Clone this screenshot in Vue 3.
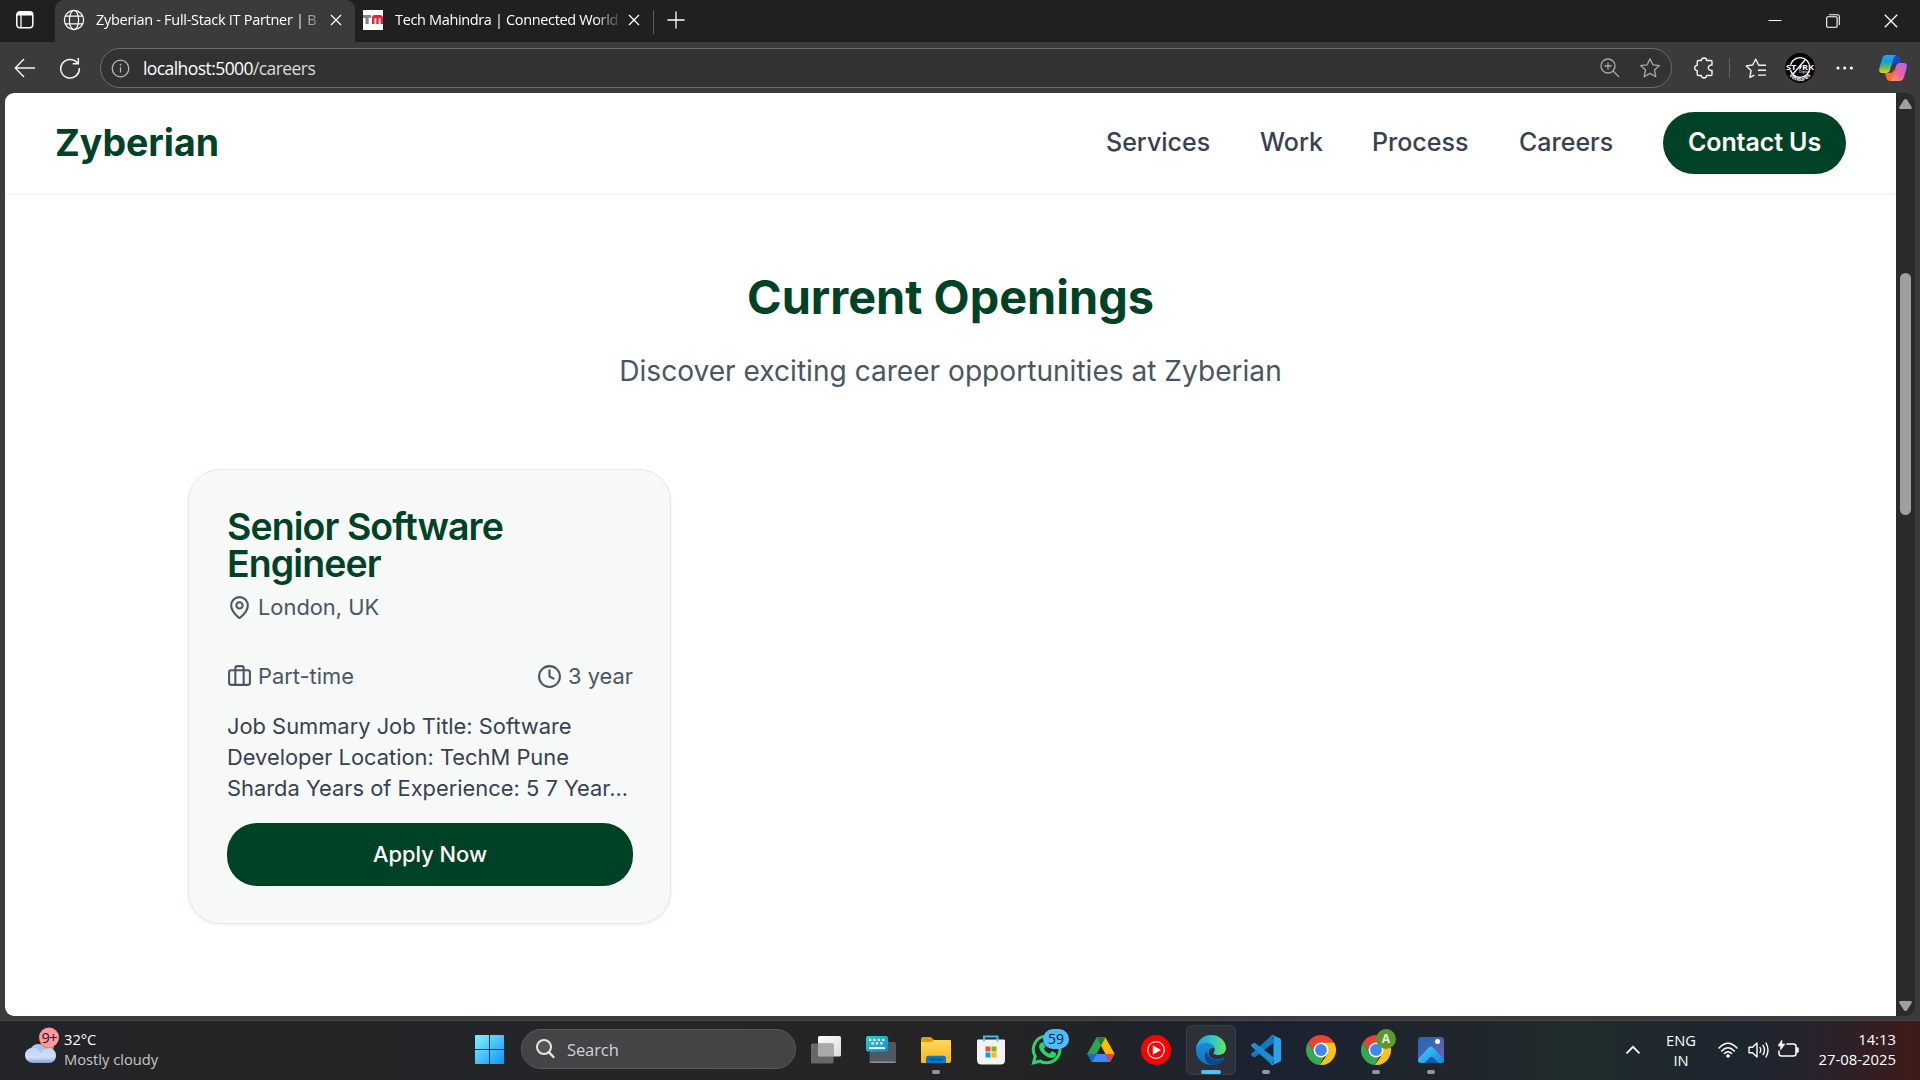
<script setup>
const navLinks = [
  { label: 'Services', width: 104 },
  { label: 'Work', width: 62 },
  { label: 'Process', width: 97 },
  { label: 'Careers', width: 94 },
]
</script>

<template>
  <div class="screen">
    <div class="tabstrip">
      <div class="tab-actions">
        <svg width="20" height="20" viewBox="0 0 20 20" fill="none" stroke="#fff" stroke-width="1.5"><rect x="1.8" y="1.8" width="16" height="16" rx="3" /><path d="M2 4.500h15.600M2.500 3h14.800" stroke-width="2" /><path d="M6 5v12.500" stroke-width="1.300" /></svg>
      </div>
      <div class="tab active">
        <svg class="favicon" width="22" height="22" viewBox="0 0 22 22" fill="none" stroke="#fff" stroke-width="1.2"><circle cx="11" cy="11" r="9.6" /><ellipse cx="11" cy="11" rx="4.6" ry="9.6" /><path d="M2.3 7.2h17.4M2.3 14.8h17.4" /></svg>
        <span class="tab-title t1">Zyberian - Full-Stack IT Partner | B</span>
        <svg class="close" width="12" height="12" viewBox="0 0 12 12" stroke="#fff" stroke-width="1.3"><path d="M1 1l10 10M11 1L1 11" /></svg>
      </div>
      <div class="tab second">
        <svg class="favicon tm" width="20" height="20" viewBox="0 0 20 20"><path fill="#fff" d="M0 0h20v20H0z" /><path fill="#858688" d="M0 5h8v3H5.700v6H2.500V8H0z" /><path fill="#e4253e" d="M9 14V7.500Q9 5 12 5h5q3 0 3 3v6h-2.500V8h-1.800v6h-2.400V8h-1.800v6z" /></svg>
        <span class="tab-title t2">Tech Mahindra | Connected World</span>
        <svg class="close" width="12" height="12" viewBox="0 0 12 12" stroke="#fff" stroke-width="1.3"><path d="M1 1l10 10M11 1L1 11" /></svg>
      </div>
      <i class="tab-sep"></i>
      <svg class="plus" width="18" height="18" viewBox="0 0 18 18" stroke="#fff" stroke-width="1.3"><path d="M9 .5v17M.5 9h17" /></svg>
      <div class="win-controls">
        <svg width="14" height="14" viewBox="0 0 14 14" stroke="#fff" stroke-width="1"><path d="M.5 6.500h13" /></svg>
        <svg width="14" height="14" viewBox="0 0 14 14" fill="none" stroke="#fff" stroke-width="1.100"><rect x=".7" y="2.700" width="10.400" height="10.600" rx="1" /><path d="M3 .7h8.300a2 2 0 0 1 2 2V11" /></svg>
        <svg width="14" height="14" viewBox="0 0 14 14" stroke="#fff" stroke-width="1.300"><path d="M.8.8l12.400 12.400M13.200.8L.8 13.200" /></svg>
      </div>
    </div>

    <div class="toolbar">
      <svg class="back" width="22" height="20" viewBox="0 0 22 20" fill="none" stroke="#f4f4f4" stroke-width="1.400"><path d="M21 10H1.500M10 1L1.300 10l8.700 9" /></svg>
      <svg class="reload" width="22" height="22" viewBox="0 0 22 22" fill="none" stroke="#f4f4f4" stroke-width="1.500"><path d="M18.500 6.200A9.300 9.300 0 1 0 20.300 11M19.300 1v5.800h-5.600" /></svg>
      <div class="urlbar">
        <svg class="info" width="19" height="19" viewBox="0 0 19 19" fill="none" stroke="#bdbdbd" stroke-width="1.200"><circle cx="9.500" cy="9.500" r="8.300" /><path d="M9.500 8.300v5.200" /><circle cx="9.500" cy="5.800" r=".6" fill="#bdbdbd" stroke-width=".6" /></svg>
        <span class="url">localhost:5000<em>/careers</em></span>
        <svg class="mag" width="20" height="20" viewBox="0 0 20 20" fill="none" stroke="#a8a8a8" stroke-width="1.300"><circle cx="8" cy="8" r="7" /><path d="M13 13l6 6M8 4.500v7M4.500 8h7" /></svg>
        <svg class="star" width="22" height="22" viewBox="0 0 22 22" fill="none" stroke="#a8a8a8" stroke-width="1.300" stroke-linejoin="round"><path d="M11 1.700l2.800 6.100 6.600.8-4.900 4.500 1.300 6.600-5.800-3.300-5.800 3.300 1.300-6.600L1.600 8.600l6.600-.8z" /></svg>
      </div>
      <svg class="puzzle" width="20" height="22" viewBox="0 0 20 22" fill="none" stroke="#f4f4f4" stroke-width="1.400" stroke-linejoin="round"><path d="M4.500 3.500h2.800C7.600.2 12.600.2 12.700 3.500h4q1.300 0 1.300 1.300V8c-4.900-.6-4.900 6 0 5.400v3.800q0 1.300-1.300 1.300h-4c-.2 3.300-5.200 3.300-5.400 0H4.500q-1.300 0-1.300-1.300v-3.600C-.1 13.600-.1 8.400 3.200 8.400V4.800q0-1.300 1.300-1.300z" /></svg>
      <i class="tool-sep"></i>
      <svg class="favs" width="22" height="21" viewBox="0 0 22 21" fill="none" stroke="#f4f4f4" stroke-width="1.400" stroke-linejoin="round"><path d="M21 7.200h-7.200L10.700 1.200 7.700 7l-6.400.9 4.700 4.500-1.100 7 4.500-2.300M13 12.200h8M13 17.100h8" /></svg>
      <svg class="avatar" width="30" height="30" viewBox="0 0 30 30"><circle cx="15" cy="15" r="15" fill="#070707" /><circle cx="15" cy="14.500" r="9.800" fill="none" stroke="#fff" stroke-width="1.300" /><path fill="#070707" d="M1 12h28v5H1z" /><text x="1" y="17" font-size="6.500" font-weight="700" textLength="10.500" lengthAdjust="spacingAndGlyphs" fill="#fff">ST</text><text x="17" y="17" font-size="6.500" font-weight="700" textLength="12" lengthAdjust="spacingAndGlyphs" fill="#fff">RK</text><path d="M8 21L20 7M14.500 16.500l2-4" stroke="#fff" stroke-width="1.300" /><text x="14" y="20" font-size="3.500" fill="#fff">Digital</text><path id="arc" d="M3 20.500a13.300 13.300 0 0 0 24 0" fill="none" /><text font-size="5.500" font-weight="700" fill="#fff"><textPath href="#arc" startOffset="2">Ventures</textPath></text></svg>
      <svg class="more" width="18" height="4" viewBox="0 0 18 4" fill="#fff"><circle cx="2" cy="2" r="1.500" /><circle cx="8.700" cy="2" r="1.500" /><circle cx="15.400" cy="2" r="1.500" /></svg>
      <svg class="copilot" width="28" height="26" viewBox="0 0 28 26">
        <defs>
          <linearGradient id="ca" x1="0" y1="0" x2="0" y2="1"><stop offset="0" stop-color="#20a9f5" /><stop offset=".35" stop-color="#189be0" /><stop offset=".7" stop-color="#62bd55" /><stop offset="1" stop-color="#f2cf10" /></linearGradient>
          <linearGradient id="cb" x1="1" y1="0" x2="0" y2="1"><stop offset="0" stop-color="#a86af5" /><stop offset=".5" stop-color="#ed5fa5" /><stop offset="1" stop-color="#ff9b58" /></linearGradient>
        </defs>
        <path fill="#1746c9" d="M11 0h6q3 0 4 4l1 4h-5q-3 0-4 4z" /><path fill="#fb6a31" d="M17 26h-6q-3 0-4-4l-1-4h5q3 0 4-4z" />
        <path fill="url(#ca)" d="M7.500 0H17q-2 1-3 5l-3 10q-1 3-4 3H3Q-.8 18 .4 13L3 4q1.200-4 4.500-4z" /><path fill="url(#cb)" d="M20.500 26H11q2-1 3-5l3-10q1-3 4-3h4q3.800 0 2.600 5L25 22q-1.200 4-4.500 4z" />
      </svg>
    </div>

    <div class="viewport">
      <div class="page">
        <header class="header">
          <div class="brand">Zyberian</div>
          <nav class="nav">
            <a v-for="link in navLinks" :key="link.label" class="link" :style="{ width: link.width + 'px' }">{{ link.label }}</a>
            <a class="contact">Contact Us</a>
          </nav>
        </header>
        <main class="main">
          <h1>Current Openings</h1>
          <p class="lead">Discover exciting career opportunities at Zyberian</p>
          <article class="card">
            <h2>Senior Software<br />Engineer</h2>
            <div class="meta location">
              <svg width="25" height="25" viewBox="0 0 24 24" class="line"><path d="M20 10c0 4.993-5.539 10.193-7.399 11.799a1 1 0 0 1-1.202 0C9.539 20.193 4 14.993 4 10a8 8 0 0 1 16 0" /><circle cx="12" cy="10" r="3" /></svg>
              <span>London, UK</span>
            </div>
            <div class="facts">
              <div class="meta">
                <svg width="25" height="25" viewBox="0 0 24 24" class="line"><path d="M16 20V4a2 2 0 0 0-2-2h-4a2 2 0 0 0-2 2v16" /><rect width="20" height="14" x="2" y="6" rx="2" /></svg>
                <span>Part-time</span>
              </div>
              <div class="meta">
                <svg width="25" height="25" viewBox="0 0 24 24" class="line"><circle cx="12" cy="12" r="10" /><path d="M12 6v6l4 2" /></svg>
                <span>3 year</span>
              </div>
            </div>
            <p class="summary">Job Summary Job Title: Software<br />Developer Location: TechM Pune<br />Sharda Years of Experience: 5 7 Year...</p>
            <button class="apply">Apply Now</button>
          </article>
        </main>
      </div>
      <div class="scrollbar">
        <svg width="13" height="10" viewBox="0 0 13 10" fill="#a0a0a0"><path d="M6.500 0q1 0 1.800 1.200l4.200 6.600q.9 2.200-1 2.200h-10Q-.4 10 .5 7.800L4.700 1.200Q5.500 0 6.500 0z" /></svg>
        <i class="thumb"></i>
        <svg width="13" height="10" viewBox="0 0 13 10" fill="#a0a0a0"><path d="M6.500 10q-1 0-1.800-1.200L.5 2.200Q-.4 0 1.500 0h10q1.900 0 1 2.200L8.300 8.800Q7.500 10 6.500 10z" /></svg>
      </div>
    </div>

    <footer class="taskbar">
      <div class="weather">
        <svg width="36" height="38" viewBox="0 0 36 38">
          <defs><linearGradient id="cl" x1="0" y1="0" x2="0" y2="1"><stop offset="0" stop-color="#b9d1fa" /><stop offset=".7" stop-color="#d1def8" /><stop offset="1" stop-color="#7e9fdf" /></linearGradient></defs>
          <circle cx="22" cy="19" r="7" fill="#f58220" /><path fill="url(#cl)" d="M8 36a7.700 7.700 0 0 1-1.500-15.300C9 16 17 15.500 20 22c6-3 11 1 11 6.500 0 4.500-3 7.500-7 7.500z" /><path fill="#a6c4f8" d="M6.500 21C9 16 17 15.500 20 22q-3 1-4 4-4-6-9.500-5z" />
          <circle cx="24" cy="10.500" r="10" fill="#ff98a1" /><text x="16.600" y="16" font-size="14.500" fill="#191919" textLength="16">9+</text>
        </svg>
        <div class="weather-text"><span>32°C</span><span class="dim">Mostly cloudy</span></div>
      </div>
      <svg class="start" width="29" height="29" viewBox="0 0 29 29"><defs><linearGradient id="win" gradientUnits="userSpaceOnUse" x1="0" y1="0" x2="29" y2="29"><stop offset="0" stop-color="#7df3ff" /><stop offset="1" stop-color="#0f94fb" /></linearGradient></defs><path fill="url(#win)" d="M1 0h13v14H0V1q0-1 1-1zM15 0h13q1 0 1 1v13H15zM0 15h14v14H1q-1 0-1-1zM15 15h14v13q0 1-1 1H15z" /></svg>
      <div class="search">
        <svg width="19" height="20" viewBox="0 0 19 20" fill="none" stroke="#e6e6e6" stroke-width="2"><circle cx="8" cy="8" r="7" fill="#555558" /><path d="M12.800 13.200L17.500 18" stroke-linecap="round" stroke-width="2.400" /></svg>
        <span>Search</span>
      </div>
      <div class="apps">
        <div class="app">
          <svg width="32" height="32" viewBox="0 0 32 32"><defs><linearGradient id="tv" x1="0" y1="0" x2="1" y2="1"><stop offset="0" stop-color="#fff" /><stop offset="1" stop-color="#dcdcdc" /></linearGradient></defs><rect x="8" y="2" width="23" height="20.500" rx="1.500" fill="url(#tv)" /><rect x="1" y="9.500" width="22.500" height="20" rx="1.500" fill="#707070" opacity=".9" /><path fill="#aaa" d="M8 9.500h15.500v13H9.500q-1.500 0-1.500-1.500z" /></svg>
        </div>
        <div class="app">
          <svg width="32" height="32" viewBox="0 0 32 32"><defs><linearGradient id="kb" x1="0" y1="0" x2="1" y2="1"><stop offset="0" stop-color="#2bd0c0" /><stop offset="1" stop-color="#1587df" /></linearGradient></defs><rect x="4.500" y="8" width="26.500" height="21" rx="2" fill="#515960" /><path fill="#8a949b" d="M4.500 27.500H31q0 1.500-2 1.500H6.500q-2 0-2-1.500z" /><rect x="1" y="2" width="22" height="15.500" rx="2" fill="url(#kb)" /><path d="M4 5.900h17M6.500 9.400h12" stroke="#fff" stroke-width="2.200" stroke-dasharray="2.200 2.200" /><path stroke="#fff" stroke-width="2" d="M4 14h16" /></svg>
        </div>
        <div class="app run">
          <svg width="32" height="32" viewBox="0 0 32 32"><defs><linearGradient id="fo" x1="0" y1="0" x2="0" y2="1"><stop offset="0" stop-color="#ffd75e" /><stop offset="1" stop-color="#f9b714" /></linearGradient></defs><path fill="#df9d06" d="M1 5q0-2 2-2h7q1 0 2 1l2 2v6H1z" /><path fill="url(#fo)" d="M1 8h10l3-2h16q1 0 1 1v20q0 2-2 2H2q-1 0-1-1z" /><path fill="#0c76c8" d="M6 29v-5q0-2.300 2.500-2.300h15q2.500 0 2.500 2.300v5z" /><path stroke="#064e8e" stroke-width="1.500" d="M9.500 25.500h13" /></svg>
        </div>
        <div class="app">
          <svg width="32" height="32" viewBox="0 0 32 32"><path fill="none" stroke="#35bff0" stroke-width="2" d="M9 7V2.500h13.500V7" /><path fill="#f3f3f3" d="M3 5.500h25.500q1.500 0 1.500 1V26q0 4.500-4.500 4.500h-19Q2 30.500 2 26V6.500q0-1 1-1z" /><path fill="none" stroke="#35bff0" stroke-width="1.600" d="M9 5v2.500M22.500 5v2.500" /><path fill="#f25022" d="M10.500 12.500h5v5h-5z" /><path fill="#7fba00" d="M16.500 12.500h5v5h-5z" /><path fill="#00a4ef" d="M10.500 18.500h5v5h-5z" /><path fill="#ffb900" d="M16.500 18.500h5v5h-5z" /></svg>
        </div>
        <div class="app">
          <svg width="32" height="32" viewBox="0 0 32 32"><path fill="none" stroke="#2bd46a" stroke-width="3" d="M3.500 28.800l1.700-6.500a13.300 13.300 0 1 1 5 4.800z" /><path fill="#2bd46a" d="M11.500 8.500q1-.8 2 .2l1.500 3.500q.3.900-1.200 2.500c1.500 2.900 3.500 4.300 5.700 5l1.800-2q.6-.6 1.500-.2l3.200 1.700c.8.600-.4 4.800-4.300 4.800C16 24 9 17 9 12.500q.4-3 2.500-4z" /></svg>
          <b class="badge">59</b>
        </div>
        <div class="app">
          <svg width="32" height="32" viewBox="0 0 32 32"><path fill="#2da44e" d="M11.500 3.500L2.200 20l4.600 8 9.200-16.200z" /><path fill="#fbbc04" d="M11.500 3.500h9L29.700 20h-9.200z" /><path fill="#188038" d="M11.500 3.500h9L16 11.800z" /><path fill="#4285f4" d="M6.800 28l4.500-8h9.400l4.500 8z" /><path fill="#ea4335" d="M20.700 20h9l-4.500 8z" /><path fill="#1967d2" d="M2.200 20h9.100l-4.500 8z" /></svg>
        </div>
        <div class="app">
          <svg width="32" height="32" viewBox="0 0 32 32"><circle cx="16" cy="16" r="15" fill="#f00" /><circle cx="16" cy="16" r="8.300" fill="none" stroke="#fff" stroke-width="1.200" /><path fill="#fff" d="M12.800 11.200L21 16l-8.200 4.800z" /></svg>
        </div>
        <div class="app current">
          <svg width="32" height="32" viewBox="0 0 32 32"><defs><linearGradient id="e1" x1="0" y1="0" x2="1" y2="0"><stop offset="0" stop-color="#249ed5" /><stop offset=".55" stop-color="#31c4cc" /><stop offset="1" stop-color="#6be948" /></linearGradient><linearGradient id="e2" x1="0" y1="0" x2="0" y2="1"><stop offset="0" stop-color="#168ed8" /><stop offset="1" stop-color="#1470c4" /></linearGradient></defs><path fill="url(#e2)" d="M1 16C1 11 6 7.500 11 8c5 0 8 3 8 6-6-1-8 9 .5 11 4 1 8-.7 9.700-1.500C26.500 28.500 21.500 31 16 31A15 15 0 0 1 1 16z" /><path fill="#0d4a8c" d="M12 17c0 7 7 11 17 7.500.7-.3 1 .3.500 1C26 30 21 31.500 17 31c-7-1-9.500-10-5-14z" /><path fill="url(#e1)" d="M1 15.500A15 15 0 0 1 16 1c9 0 15 6.500 15 13 0 5-4 7-7.500 7-3 0-5.500-1-5-2 2.500-3 1.500-8.500-5-10C8 7.700 2.500 11 1 15.500z" /></svg>
        </div>
        <div class="app run">
          <svg width="32" height="32" viewBox="0 0 32 32"><path fill="#1479bf" d="M22 1L1.500 19.500q-.8 1 0 2L3.500 23q.8.600 1.600 0L24 8.500z" /><path fill="#1d8bd1" d="M22 31L1.500 12.500q-.8-1 0-2L3.500 9q.8-.6 1.600 0L24 23.500z" /><path fill="#2ba3ec" d="M22.500 1l7.300 3.200Q31 5 31 6v20q0 1-1.200 1.800L22.500 31q-1 .3-1.500-.5l2.500-1.500V3L21 1.500q.5-.8 1.500-.5z" /></svg>
        </div>
        <div class="app">
          <svg width="32" height="32" viewBox="0 0 32 32"><path fill="#ea4335" d="M3 8.500a15 15 0 0 1 26 0H16L9.500 19.700z" /><path fill="#34a853" d="M3 8.500l6.500 11.200Q12 24 19.500 22L15 31A15 15 0 0 1 3 8.500z" /><path fill="#fbc116" d="M16 8.500h13A15 15 0 0 1 15 31l7.500-11.300z" /><circle cx="16" cy="16" r="7.500" fill="#fff" /><circle cx="16" cy="16" r="5.900" fill="#4285f4" /></svg>
        </div>
        <div class="app run">
          <svg width="32" height="32" viewBox="0 0 32 32"><path fill="#ea4335" d="M3 8.500a15 15 0 0 1 26 0H16L9.500 19.700z" /><path fill="#34a853" d="M3 8.500l6.500 11.200Q12 24 19.500 22L15 31A15 15 0 0 1 3 8.500z" /><path fill="#fbc116" d="M16 8.500h13A15 15 0 0 1 15 31l7.500-11.300z" /><circle cx="16" cy="16" r="7.500" fill="#fff" /><circle cx="16" cy="16" r="5.900" fill="#4285f4" /></svg>
          <b class="badge green">A</b>
        </div>
        <div class="app run">
          <svg width="32" height="32" viewBox="0 0 32 32"><defs><linearGradient id="ph" x1="0" y1="0" x2="1" y2="1"><stop offset="0" stop-color="#1768bd" /><stop offset=".6" stop-color="#5860ae" /><stop offset="1" stop-color="#875ab1" /></linearGradient><linearGradient id="pm" x1="0" y1="0" x2="1" y2="1"><stop offset="0" stop-color="#3bd5ff" /><stop offset="1" stop-color="#1684dc" /></linearGradient></defs><rect x="3" y="3" width="26" height="26" rx="3" fill="url(#ph)" /><path fill="url(#pm)" d="M3 25l11-11.500q2-2 4 0L29 25v1q0 3-3 3H6q-3 0-3-3z" /><path fill="#0c5bac" d="M9.500 29l5.500-5.500q1.500-1.500 3 0L23.500 29z" /><circle cx="22.500" cy="7.500" r="2.500" fill="#fff" /></svg>
        </div>
      </div>
      <div class="tray">
        <svg class="chev" width="14" height="9" viewBox="0 0 14 9" fill="none" stroke="#fff" stroke-width="1.700" stroke-linecap="round"><path d="M1 7.800l6-6 6 6" /></svg>
        <div class="lang"><span>ENG</span><span>IN</span></div>
        <svg class="wifi" width="20" height="16" viewBox="0 0 20 16" fill="none" stroke="#fff" stroke-width="1.500" stroke-linecap="round"><path d="M1 6q9-9.500 18 0M3.700 8.900q6.300-6.500 12.600 0M6.400 11.500q3.600-3.700 7.200 0" /><circle cx="10" cy="14" r="1.300" fill="#fff" stroke-width="1" /></svg>
        <svg class="vol" width="21" height="18" viewBox="0 0 21 18" fill="none" stroke="#fff" stroke-width="1.400" stroke-linecap="round" stroke-linejoin="round"><path d="M1 6.300h3.500L9 2v14l-4.500-4.300H1zM12 6.500q1.500 2.500 0 5M15 4.300q3 4.700 0 9.400M18 2q4 7 0 14" /></svg>
        <svg class="bat" width="21" height="18" viewBox="0 0 21 18" fill="none" stroke="#fff" stroke-width="1.500" stroke-linecap="round"><path d="M9 4h6.500q2.500 0 2.500 2.500v7q0 2.500-2.500 2.500h-12Q1 16 1 13.500V11" /><path fill="#fff" stroke-width=".5" d="M4 0v4h3L2.500 10V6H0zM18.500 7.500h1q1 0 1 1v3q0 1-1 1h-1z" /></svg>
        <div class="clock"><span>14:13</span><span>27-08-2025</span></div>
      </div>
    </footer>
  </div>
</template>

<style>
html, body { margin: 0; overflow: hidden; background: #3b3b3b; }
</style>

<style scoped>
* { box-sizing: border-box; }
svg { display: block; flex: none; }
.screen { width: 1920px; height: 1080px; display: flex; flex-direction: column; background: #3b3b3b; font-family: "Open Sans", "Noto Sans", sans-serif; color: #fff; }

.tabstrip { height: 42px; background: #202020; display: flex; align-items: flex-start; }
.tab-actions { width: 55px; height: 42px; padding: 10px 0 0 15px; }
.tab { display: flex; align-items: center; height: 40px; }
.tab.active { width: 300px; height: 42px; padding: 0 0 2px 8px; background: #3b3b3b; border-radius: 9px 9px 0 0; }
.tab.second { width: 298px; padding-left: 8px; }
.tab-title { height: 22px; line-height: 21px; font-size: 14.500px; white-space: nowrap; }
.t1 { width: 224px; margin-left: 11px; letter-spacing: -.29px; -webkit-mask-image: linear-gradient(90deg, #000 200px, transparent 232px); }
.t2 { width: 224px; margin-left: 12px; letter-spacing: -.35px; -webkit-mask-image: linear-gradient(90deg, #000 200px, transparent 228px); }
.close { margin-left: 10px; }
.tab.second .close { margin-left: 9px; }
.tab-sep { width: 1px; height: 24px; margin-top: 10px; background: #5b5b5b; }
.plus { margin: 11px 0 0 13px; }
.win-controls { margin: 14px 22px 0 auto; display: flex; gap: 44px; }

.toolbar { height: 51px; display: flex; align-items: center; padding: 1px 13px 0 14px; }
.reload { margin-left: 23px; }
.urlbar { margin-left: 19px; width: 1573px; height: 40px; display: flex; align-items: center; padding: 0 10px 0 10px; border: 1px solid #6c6c6c; border-radius: 20px; background: #323232; }
.url { margin-left: 13px; padding-bottom: 1px; font-size: 17.500px; letter-spacing: -.57px; line-height: 22px; }
.url em { font-style: normal; color: #dadada; }
.mag { margin-left: auto; }
.star { margin-left: 19px; }
.puzzle { margin-left: 22px; }
.tool-sep { width: 1px; height: 20px; margin: 0 15px; background: #666; }
.avatar { margin-left: 18px; }
.more { margin-left: 21px; }
.copilot { margin-left: 25px; }

.viewport { height: 923px; margin: 0 5px 4px; display: flex; border-radius: 9px; overflow: hidden; background: #2b2b2b; }
.page { width: 1891px; background: #fff; font-family: Inter, sans-serif; }
.header { height: 100px; padding: 0 50px; display: flex; align-items: center; justify-content: space-between; box-shadow: 0 1px 3px rgba(0, 0, 0, .08); }
.brand { padding-bottom: 2px; font-size: 37.500px; font-weight: 700; letter-spacing: -.05px; color: #004225; }
.nav { display: flex; align-items: center; gap: 50px; font-size: 25px; font-weight: 500; color: #374151; white-space: nowrap; }
.link { padding-bottom: 2px; }
.contact { width: 183px; height: 62px; line-height: 61px; border-radius: 31px; background: #004225; color: #fff; text-align: center; font-weight: 600; letter-spacing: -.1px; }
.main { padding: 74px 183px 0; display: flex; flex-direction: column; align-items: center; }
h1 { margin: 0; font-size: 46.875px; line-height: 60px; font-weight: 700; color: #004225; white-space: nowrap; }
.lead { margin: 24px 0 0; font-size: 28.100px; line-height: 40px; color: #4b5563; white-space: nowrap; }
.card { align-self: flex-start; width: 483px; height: 455px; margin-top: 78px; padding: 38px 37px 36px 38px; border: 1px solid #e2e8f0; border-radius: 32px; background: #f6f9f8; box-shadow: 0 1px 3px rgba(0, 0, 0, .07); white-space: nowrap; }
h2 { margin: 0; font-size: 37.500px; line-height: 37px; font-weight: 600; letter-spacing: -.94px; color: #004225; }
.meta { display: flex; align-items: center; gap: 6px; height: 32px; font-size: 21.875px; color: #4b5563; }
.line { fill: none; stroke: currentColor; stroke-width: 2; stroke-linecap: round; stroke-linejoin: round; }
.location { margin-top: 9px; }
.facts { display: flex; justify-content: space-between; margin-top: 37px; }
.summary { margin: 19px 0 0; font-size: 21.875px; line-height: 31px; color: #374151; }
.apply { display: block; width: 406px; height: 63px; margin-top: 19px; padding: 0 0 1px; border: 0; border-radius: 30px; background: #004225; color: #fff; font: 500 21.875px Inter, sans-serif; }
.scrollbar { width: 19px; padding: 6px 0 5px; display: flex; flex-direction: column; align-items: center; }
.thumb { width: 11px; height: 242px; margin: 164px 0 auto; border-radius: 6px; background: #9f9f9f; }

.taskbar { height: 60px; display: flex; border-top: 1px solid #45474a; background: linear-gradient(90deg, #222429 0, #262524 15%, #222529 25%, #272523 36%, #232326 55%, #1b2230 66%, #20252c 75%, #202c2d 82%, #1d2530 91%, #29222b 95%, #3f1b1a 100%); }
.weather { width: 450px; display: flex; padding: 6px 0 0 25px; }
.weather-text { display: flex; flex-direction: column; margin-left: 3px; padding-top: 2px; font-size: 14.700px; line-height: 20px; }
.dim { color: #c6c8ca; }
.start { margin: 14px 0 0 25px; }
.search { width: 275px; height: 40px; margin: 8px 0 0 17px; padding-left: 14px; display: flex; align-items: center; border: 1px solid #5a5a5c; border-radius: 20px; background: #444447; font-size: 16.500px; color: #d2d2d2; }
.search span { margin-left: 12px; padding-top: 1px; letter-spacing: -.1px; }
.apps { display: flex; margin-left: 3px; }
.app { width: 55px; height: 59px; padding: 13px 0 0 11px; position: relative; }
.app.current { padding-top: 0; }
.app.current svg { width: 50px; height: 50px; padding: 8px; margin: 4px 0 0 -9px; border: 1px solid #39404a; border-radius: 6px; background: #2d3038; }
.app.run::after, .app.current::after { content: ""; position: absolute; left: 23px; top: 49px; width: 8px; height: 4px; border-radius: 2px; background: #969799; }
.app.current::after { left: 17px; width: 20px; background: #4cc2ff; }
.badge { position: absolute; left: 24px; top: 8px; width: 26px; height: 20px; border-radius: 10px; background: #4cbcff; color: #12202c; text-align: center; font-size: 14px; line-height: 20px; font-weight: 400; }
.badge.green { left: 27px; width: 20px; background: #5e9732; color: #e6f0dd; font-size: 12px; font-weight: 700; }
.tray { margin-left: auto; display: flex; padding-right: 24px; }
.chev { margin-top: 24px; }
.lang { width: 40px; margin: 9px 0 0 21px; display: flex; flex-direction: column; align-items: center; font-size: 14.700px; line-height: 20px; }
.wifi { margin: 21px 0 0 17px; }
.vol { margin: 20px 0 0 10px; }
.bat { margin: 19px 0 0 9px; }
.clock { width: 86px; margin: 8px 0 0 11px; display: flex; flex-direction: column; align-items: flex-end; font-size: 14.850px; line-height: 20px; white-space: nowrap; }
</style>
